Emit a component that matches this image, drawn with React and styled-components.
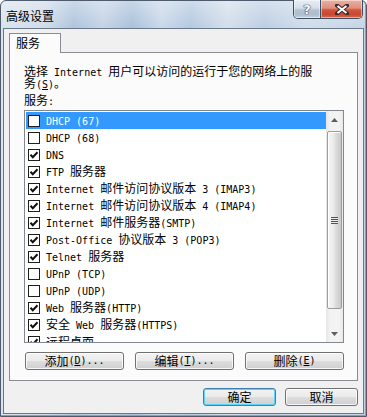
import styled, { createGlobalStyle } from 'styled-components';

const GlobalStyle = createGlobalStyle`
body{
  margin:0;
  background:#fff;
}
*{box-sizing:border-box;}
`

const Window = styled.div`
width:367px;
height:417px;
display:flex;
flex-direction:column;
padding:0 2px 2px;
border:1px solid #4d5b6d;
border-radius:6px 6px 0 0;
background:
  linear-gradient(180deg, rgba(255,255,255,0.35) 0px, rgba(255,255,255,0) 28px),
  linear-gradient(90deg, #d9e3ee 0%, #cfdbe9 12%, #aec4dc 20%, #c3d3e6 28%, #a9c0da 36%, #c9d8e9 44%, #b3c8df 52%, #d3deeb 62%, #bccee3 72%, #d0dcea 84%, #c4d4e6 100%);
box-shadow:inset -1px -1px 0 #3fbbe6;
font-family:"Noto Sans CJK SC", sans-serif;
font-size:12px;
color:#000;
`

const TitleBar = styled.div`
height:27px;
flex:none;
display:flex;
align-items:flex-start;
justify-content:space-between;
`

const Title = styled.div`
padding:8px 0 0 3px;
line-height:13px;
`

const Caption = styled.div`
display:flex;
margin:-1px 1px 0 0;
height:19px;
border:1px solid #3f4d60;
border-top:none;
border-radius:0 0 5px 5px;
overflow:hidden;
`

const CapButton = styled.div`
width:${p => p.w}px;
display:flex;
align-items:center;
justify-content:center;
background:${p => p.close
  ? 'linear-gradient(180deg,#eab2a5 0%,#e08e7c 45%,#cf553d 55%,#c9472f 80%,#d86a4c 100%)'
  : 'linear-gradient(180deg,#e7edf4 0%,#d5dfea 45%,#b4c2d2 55%,#aebdcf 80%,#c6d3e2 100%)'};
border-left:${p => p.close ? '1px solid #3f4d60' : 'none'};
box-shadow:inset 0 0 0 1px rgba(255,255,255,0.45);
`

const Help = styled.span`
font-family:"DejaVu Sans", sans-serif;
font-weight:bold;
font-size:13px;
line-height:13px;
color:#fff;
text-shadow:0 0 1px #2d3a4c, 0 0 1px #2d3a4c, 0 0 1px #2d3a4c;
`

const Client = styled.div`
flex:1;
display:flex;
flex-direction:column;
border:1px solid #6a7889;
background:#f0f0f0;
padding:4px 5px 7px 5px;
`

const Tab = styled.div`
align-self:flex-start;
position:relative;
z-index:1;
width:52px;
height:20px;
margin-bottom:-1px;
padding-left:6px;
border:1px solid #898c95;
border-bottom:none;
background:#fbfbfb;
line-height:18px;
`

const Panel = styled.div`
height:329px;
flex:none;
display:flex;
flex-direction:column;
border:1px solid #898c95;
background:#fbfbfb;
padding:12px 13px 10px 14px;
`

const Text = styled.div`
height:12px;
flex:none;
line-height:12px;
white-space:nowrap;
margin-top:${p => p.mt || 0}px;
`

const Latin = styled.span`
font-family:"DejaVu Sans Mono", monospace;
font-size:10px;
white-space:pre;
`

const KeyLetter = styled(Latin)`
text-decoration:underline;
`

const List = styled.div`
margin-top:4px;
height:233px;
flex:none;
display:flex;
border:1px solid #828790;
background:#fff;
`

const Rows = styled.div`
flex:1;
overflow:hidden;
padding:1px 0 0 1px;
`

const Row = styled.div`
height:17px;
display:flex;
align-items:center;
gap:6px;
padding-left:2px;
white-space:nowrap;
line-height:12px;
background:${p => p.selected ? '#3399ff' : 'transparent'};
color:${p => p.selected ? '#fff' : '#000'};
`

const Box = styled.span`
width:12px;
height:12px;
flex:none;
display:flex;
align-items:center;
justify-content:center;
border:1px solid #1e1e1e;
background:#fff;
`

const Scrollbar = styled.div`
width:17px;
flex:none;
display:flex;
flex-direction:column;
background:linear-gradient(90deg,#e6e6e6 0%,#f3f3f3 25%,#f3f3f3 75%,#e9e9e9 100%);
`

const ArrowBtn = styled.div`
height:17px;
flex:none;
display:flex;
align-items:center;
justify-content:center;
`

const Track = styled.div`
flex:1;
padding:3px 1px 0;
`

const Thumb = styled.div`
height:178px;
display:flex;
align-items:center;
justify-content:center;
border:1px solid #9c9c9c;
border-radius:2px;
background:linear-gradient(90deg,#f4f4f4 0%,#ececec 40%,#dcdcdc 60%,#c9c9c9 100%);
box-shadow:inset 1px 1px 0 #fff;
`

const Grip = styled.div`
width:7px;
height:7px;
background:repeating-linear-gradient(180deg,#555 0px,#555 1px,#e8e8e8 1px,#e8e8e8 2px);
`

const ButtonRow = styled.div`
margin:9px 0 0 1px;
display:grid;
grid-template-columns:repeat(3, 99px);
gap:11px;
`

const Button = styled.div`
height:18px;
width:${p => p.w ? p.w + 'px' : 'auto'};
display:flex;
align-items:center;
justify-content:center;
white-space:nowrap;
border:1px solid ${p => p.primary ? '#3c7fb1' : '#707070'};
border-radius:3px;
background:linear-gradient(180deg,#f2f2f2 0%,#ebebeb 48%,#dddddd 52%,#cfcfcf 100%);
box-shadow:inset 0 0 0 1px ${p => p.primary ? '#5cd6f8' : 'rgba(255,255,255,0.8)'};
line-height:12px;
`

const Footer = styled.div`
margin-top:7px;
display:flex;
justify-content:flex-end;
gap:9px;
`

function Label({ text }) {
  const parts = [];
  let buf = '';
  let kind = null;
  const flush = () => {
    if (buf) parts.push([kind, buf]);
    buf = '';
  };
  for (let i = 0; i < text.length; i++) {
    const ch = text[i];
    if (ch === '&') {
      flush();
      parts.push(['key', text[i + 1]]);
      i++;
      kind = null;
      continue;
    }
    const k = /[\x20-\x7e]/.test(ch) ? 'latin' : 'cjk';
    if (k !== kind) {
      flush();
      kind = k;
    }
    buf += ch;
  }
  flush();
  return parts.map(([k, s], i) =>
    k === 'latin' ? <Latin key={i}>{s}</Latin>
      : k === 'key' ? <KeyLetter key={i}>{s}</KeyLetter>
      : <span key={i}>{s}</span>
  );
}

const services = [
  ['DHCP (67)', false],
  ['DHCP (68)', false],
  ['DNS', true],
  ['FTP 服务器', true],
  ['Internet 邮件访问协议版本 3 (IMAP3)', true],
  ['Internet 邮件访问协议版本 4 (IMAP4)', true],
  ['Internet 邮件服务器(SMTP)', true],
  ['Post-Office 协议版本 3 (POP3)', true],
  ['Telnet 服务器', true],
  ['UPnP (TCP)', false],
  ['UPnP (UDP)', false],
  ['Web 服务器(HTTP)', true],
  ['安全 Web 服务器(HTTPS)', true],
  ['远程桌面', true],
];

function Check() {
  return (
    <svg width="10" height="10" viewBox="0 0 10 10">
      <polyline points="1.5,4.8 3.8,7.3 8.5,2.3" fill="none" stroke="#111" strokeWidth="2" />
    </svg>
  );
}

function Arrow({ down }) {
  return (
    <svg width="7" height="4" viewBox="0 0 7 4">
      <polygon points={down ? '0,0 7,0 3.5,4' : '0,4 7,4 3.5,0'} fill="#5e5e5e" />
    </svg>
  );
}

export default function App() {
  return (
    <>
      <GlobalStyle />
      <Window>
        <TitleBar>
          <Title>高级设置</Title>
          <Caption>
            <CapButton w={26}><Help>?</Help></CapButton>
            <CapButton w={42} close>
              <svg width="14" height="11" viewBox="0 0 14 11">
                <path d="M2,1.5 L12,9.5 M12,1.5 L2,9.5" stroke="#3b2a28" strokeWidth="4" strokeLinecap="square" />
                <path d="M2.5,2 L11.5,9 M11.5,2 L2.5,9" stroke="#fff" strokeWidth="2" />
              </svg>
            </CapButton>
          </Caption>
        </TitleBar>

        <Client>
          <Tab>服务</Tab>
          <Panel>
            <Text><Label text="选择 Internet 用户可以访问的运行于您的网络上的服" /></Text>
            <Text><Label text="务(&S)。" /></Text>
            <Text mt={5}><Label text="服务:" /></Text>

            <List>
              <Rows>
                {services.map(([name, on], i) => (
                  <Row key={name} selected={i === 0}>
                    <Box>{on && <Check />}</Box>
                    <span><Label text={name} /></span>
                  </Row>
                ))}
              </Rows>
              <Scrollbar>
                <ArrowBtn><Arrow /></ArrowBtn>
                <Track>
                  <Thumb><Grip /></Thumb>
                </Track>
                <ArrowBtn><Arrow down /></ArrowBtn>
              </Scrollbar>
            </List>

            <ButtonRow>
              <Button><Label text="添加(&D)..." /></Button>
              <Button><Label text="编辑(&T)..." /></Button>
              <Button><Label text="删除(&E)" /></Button>
            </ButtonRow>
          </Panel>

          <Footer>
            <Button w={73} primary>确定</Button>
            <Button w={73}>取消</Button>
          </Footer>
        </Client>
      </Window>
    </>
  );
}
